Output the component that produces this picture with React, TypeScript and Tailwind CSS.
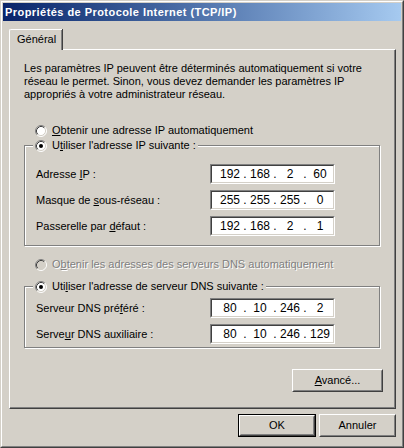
import React from "react";

const Radio = ({ checked = false, disabled = false }: { checked?: boolean; disabled?: boolean }) => (
    <svg width="12" height="12" viewBox="0 0 12 12" className="shrink-0">
        <circle cx="6" cy="6" r="5" fill={disabled ? "#d4d0c8" : "#ffffff"} />
        <path d="M2.11 9.89 A5.5 5.5 0 0 1 9.89 2.11" fill="none" stroke="#808080" strokeWidth="1" />
        <path d="M9.89 2.11 A5.5 5.5 0 0 1 2.11 9.89" fill="none" stroke="#ffffff" strokeWidth="1" />
        <path d="M2.82 9.18 A4.5 4.5 0 0 1 9.18 2.82" fill="none" stroke="#404040" strokeWidth="1" />
        <path d="M9.18 2.82 A4.5 4.5 0 0 1 2.82 9.18" fill="none" stroke="#d4d0c8" strokeWidth="1" />
        {checked && <circle cx="6" cy="6" r="2" fill="#000000" />}
    </svg>
);

const IpField = ({ segs }: { segs: string[] }) => (
    <div className="w-[125px] h-[20px] border border-t-[#808080] border-l-[#808080] border-b-white border-r-white">
        <div className="h-full border border-t-[#404040] border-l-[#404040] border-b-[#d4d0c8] border-r-[#d4d0c8] bg-white flex items-center pl-[6px] text-[12px] leading-none">
            {segs.map((s, i) => (
                <React.Fragment key={i}>
                    <span className="w-[24px] text-center">{s}</span>
                    {i < 3 && <span className="w-[6px] text-center">.</span>}
                </React.Fragment>
            ))}
        </div>
    </div>
);

const Row = ({ label, segs }: { label: React.ReactNode; segs: string[] }) => (
    <div className="flex items-center">
        <span className="w-[174px]">{label}</span>
        <IpField segs={segs} />
    </div>
);

const Button = ({ children, isDefault = false, className = "" }: { children: React.ReactNode; isDefault?: boolean; className?: string }) => (
    <div className={`h-[23px] ${isDefault ? "border border-black" : ""} ${className}`}>
        <div className="h-full border border-t-white border-l-white border-b-[#404040] border-r-[#404040]">
            <div className="h-full flex items-center justify-center border border-t-[#d4d0c8] border-l-[#d4d0c8] border-b-[#808080] border-r-[#808080]">
                {children}
            </div>
        </div>
    </div>
);

export default function App() {
    return (
        <div className="w-[404px] h-[448px] bg-[#d4d0c8] text-black text-[11px] leading-[13px] font-['Liberation_Sans',Arial,sans-serif] border border-t-[#d4d0c8] border-l-[#d4d0c8] border-b-[#404040] border-r-[#404040]">
            <div className="h-full border border-t-white border-l-white border-b-[#808080] border-r-[#808080] p-px flex flex-col">
                {/* title bar */}
                <div className="h-[18px] shrink-0 bg-gradient-to-r from-[#0a246a] to-[#a6caf0] text-white font-bold tracking-[0.45px] flex items-center pl-[2px]">
                    Propriétés de Protocole Internet (TCP/IP)
                </div>

                {/* tab */}
                <div className="mt-[8px] ml-[6px] flex">
                    <div className="relative z-10 -mb-px h-[21px] w-[53px] bg-[#d4d0c8] border-l border-t border-white rounded-tl-[2px] shadow-[inset_-1px_0_0_#808080,1px_0_0_#404040] pl-[7px] pt-[3px]">
                        Général
                    </div>
                </div>

                {/* panel */}
                <div className="ml-[6px] w-[387px] h-[360px] shrink-0 border-l border-t border-white border-r border-b border-r-[#404040] border-b-[#404040] shadow-[inset_-1px_-1px_0_#808080] flex flex-col pl-[14px] pr-[14px] pt-[12px]">
                    <p>
                        Les paramètres IP peuvent être déterminés automatiquement si votre
                        <br />
                        réseau le permet. Sinon, vous devez demander les paramètres IP
                        <br />
                        appropriés à votre administrateur réseau.
                    </p>

                    <div className="mt-[23px] ml-[11px] flex items-center gap-[5px] h-[13px]">
                        <Radio />
                        <span>
                            <u>O</u>btenir une adresse IP automatiquement
                        </span>
                    </div>

                    {/* group 1 */}
                    <div className="relative mt-[8px] w-[356px] border border-[#808080] shadow-[1px_1px_0_#ffffff,inset_1px_1px_0_#ffffff] pt-[18px] pb-[9px] pl-[11px]">
                        <div className="absolute left-[8px] -top-[7px] h-[13px] px-[2px] bg-[#d4d0c8] flex items-center gap-[5px]">
                            <Radio checked />
                            <span>
                                U<u>t</u>iliser l'adresse IP suivante :
                            </span>
                        </div>
                        <div className="flex flex-col gap-[6px]">
                            <Row label={<>Adresse <u>I</u>P :</>} segs={["192", "168", "2", "60"]} />
                            <Row label={<>Masque de <u>s</u>ous-réseau :</>} segs={["255", "255", "255", "0"]} />
                            <Row label={<>Passerelle par <u>d</u>éfaut :</>} segs={["192", "168", "2", "1"]} />
                        </div>
                    </div>

                    <div className="mt-[12px] ml-[11px] flex items-center gap-[5px] h-[13px]">
                        <Radio disabled />
                        <span className="text-[#808080] [text-shadow:1px_1px_0_#ffffff]">
                            O<u>b</u>tenir les adresses des serveurs DNS automatiquement
                        </span>
                    </div>

                    {/* group 2 */}
                    <div className="relative mt-[15px] w-[356px] border border-[#808080] shadow-[1px_1px_0_#ffffff,inset_1px_1px_0_#ffffff] pt-[11px] pb-[3px] pl-[11px]">
                        <div className="absolute left-[8px] -top-[7px] h-[13px] px-[2px] bg-[#d4d0c8] flex items-center gap-[5px]">
                            <Radio checked />
                            <span>
                                Uti<u>l</u>iser l'adresse de serveur DNS suivante :
                            </span>
                        </div>
                        <div className="flex flex-col gap-[6px]">
                            <Row label={<>Serveur DNS pré<u>f</u>éré :</>} segs={["80", "10", "246", "2"]} />
                            <Row label={<>Serve<u>u</u>r DNS auxiliaire :</>} segs={["80", "10", "246", "129"]} />
                        </div>
                    </div>

                    <Button className="mt-[21px] self-end -mr-[2px] w-[91px]">
                        <span>
                            <u>A</u>vancé...
                        </span>
                    </Button>
                </div>

                {/* dialog buttons */}
                <div className="mt-[5px] mr-[5px] flex justify-end gap-[3px]">
                    <Button isDefault className="w-[78px]">OK</Button>
                    <Button className="w-[77px]">Annuler</Button>
                </div>
            </div>
        </div>
    );
}
